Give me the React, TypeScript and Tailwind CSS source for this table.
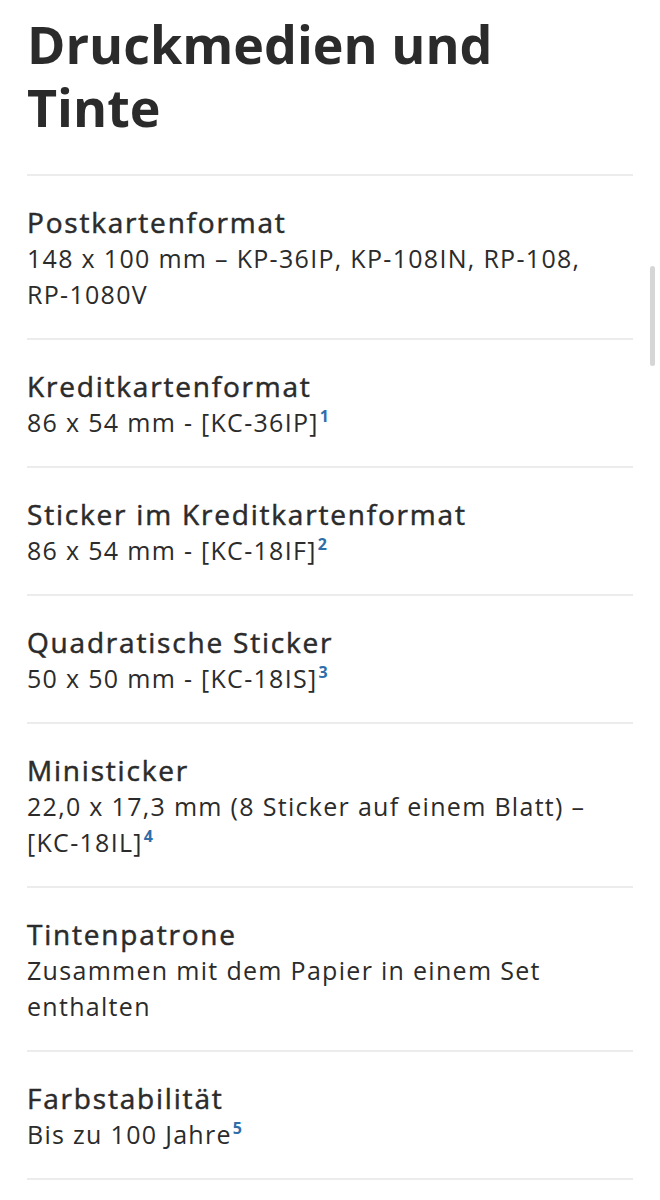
const ITEMS: { titel: string; text: string; fn?: string }[] = [
  { titel: "Postkartenformat", text: "148 x 100 mm – KP-36IP, KP-108IN, RP-108, RP-1080V" },
  { titel: "Kreditkartenformat", text: "86 x 54 mm - [KC-36IP]", fn: "1" },
  { titel: "Sticker im Kreditkartenformat", text: "86 x 54 mm - [KC-18IF]", fn: "2" },
  { titel: "Quadratische Sticker", text: "50 x 50 mm - [KC-18IS]", fn: "3" },
  { titel: "Ministicker", text: "22,0 x 17,3 mm (8 Sticker auf einem Blatt) – [KC-18IL]", fn: "4" },
  { titel: "Tintenpatrone", text: "Zusammen mit dem Papier in einem Set enthalten" },
  { titel: "Farbstabilität", text: "Bis zu 100 Jahre", fn: "5" },
];

// Wörter mit Bindestrich nicht umbrechen (RP-1080V, [KC-18IL])
function Zeile({ text }: { text: string }) {
  const woerter = text.split(" ");
  return (
    <>
      {woerter.map((w, i) => (
        <span key={i}>
          <span className="whitespace-nowrap">{w}</span>
          {i < woerter.length - 1 ? " " : ""}
        </span>
      ))}
    </>
  );
}

export default function App() {
  return (
    <main className="relative min-h-[1200px] bg-white text-[#2b2b2b] font-['Open_Sans','Liberation_Sans',sans-serif]">
      <div className="px-[27px]">
        {/* Überschrift */}
        <h1 className="max-w-[520px] pt-[12px] pb-[36px] text-[52px] leading-[63px] font-bold">
          Druckmedien und Tinte
        </h1>

        {/* Spezifikationen */}
        <div>
          {ITEMS.map((item) => (
            <div key={item.titel} className="border-t-2 border-[#ececec] pt-[28px] pb-[26px]">
              <p className="text-[28px] leading-[36px] font-medium tracking-[1.8px] [-webkit-text-stroke:0.5px_#2b2b2b]">
                {item.titel}
              </p>
              <p className="text-[25px] leading-[36px] tracking-[1.3px]">
                <Zeile text={item.text} />
                {item.fn && (
                  <sup className="ml-[1px] text-[16px] font-bold tracking-normal text-[#2f6ea8] top-[-0.6em]">
                    {item.fn}
                  </sup>
                )}
              </p>
            </div>
          ))}
          <div className="border-t-2 border-[#ececec]" />
        </div>
      </div>

      {/* Scrollbalken */}
      <div className="absolute right-[5px] top-[266px] h-[100px] w-[5px] rounded-full bg-[#d6d6d6]" />
    </main>
  );
}
